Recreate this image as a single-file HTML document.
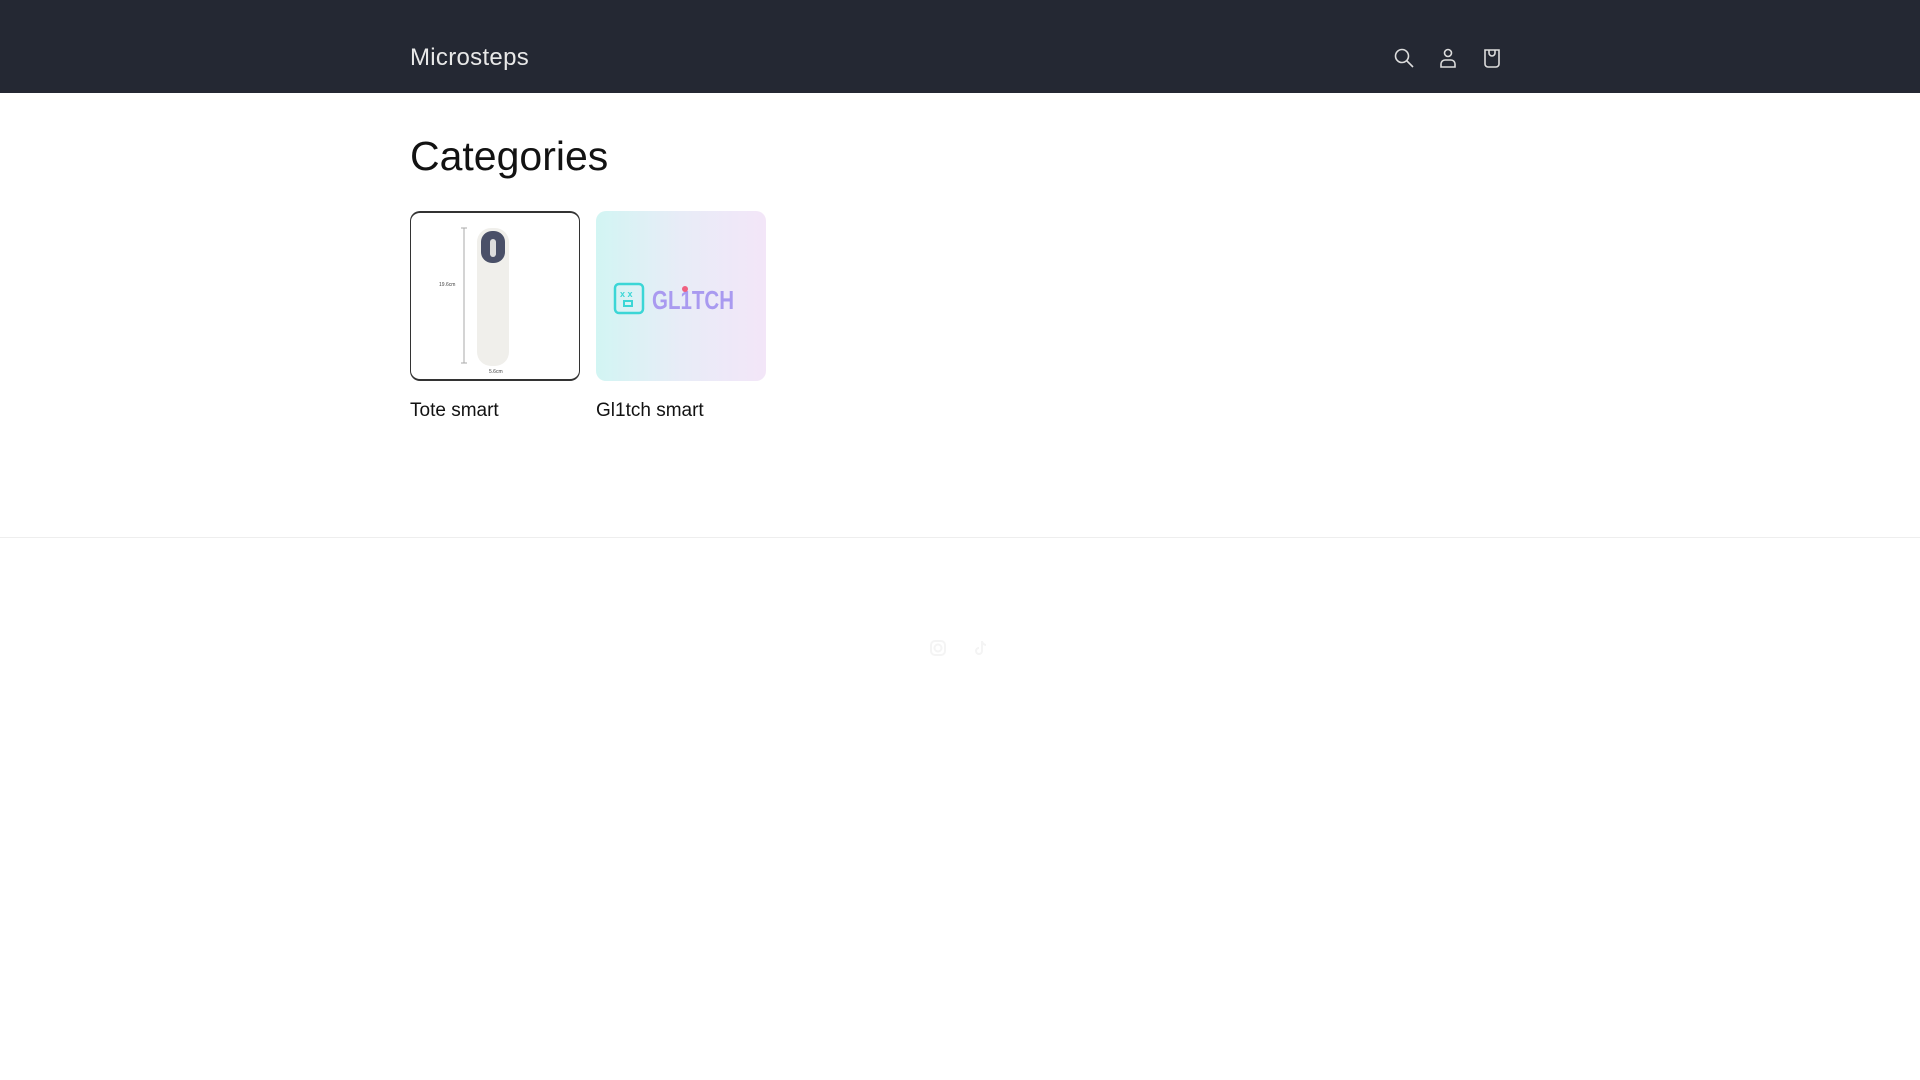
<!DOCTYPE html>
<html><head><meta charset="utf-8"><style>
*{margin:0;padding:0;box-sizing:border-box}
body{width:1920px;height:1080px;background:#fff;font-family:"Liberation Sans",sans-serif;color:#121212;overflow:hidden;position:relative}
header{height:93px;background:#242833;position:relative}
.logo{position:absolute;left:410px;top:44px;font-size:24px;color:#e8e8e8;letter-spacing:0.3px}
.ic{position:absolute;top:47px}
h1{position:absolute;left:410px;top:133px;font-size:41px;font-weight:400;color:#121212}
.card{position:absolute;top:211px;width:170px;height:170px;border-radius:10px;overflow:hidden}
.c1{left:410px;border:1px solid #333;border-top:2px solid #333;border-bottom:2px solid #333;background:#fff}
.c2{left:596px;background:linear-gradient(90deg,#d2f5f3,#e8ecf7 50%,#f3e6f8)}
.lbl{position:absolute;top:400px;font-size:19px;color:#121212}
hr{position:absolute;top:537px;left:0;width:1920px;border:0;border-top:1px solid #eee}
</style></head><body>
<header>
<div class="logo">Microsteps</div>
<svg class="ic" style="left:1393px" width="22" height="22" viewBox="0 0 22 22" fill="none" stroke="#ddd" stroke-width="1.6"><circle cx="9" cy="9" r="6.5"/><path d="M14 14l6 6"/></svg>
<svg class="ic" style="left:1437px" width="22" height="22" viewBox="0 0 22 22" fill="none" stroke="#ddd" stroke-width="1.6"><circle cx="11" cy="6" r="3.5"/><path d="M4 20v-3a4 4 0 0 1 4-4h6a4 4 0 0 1 4 4v3z"/></svg>
<svg class="ic" style="left:1481px" width="22" height="22" viewBox="0 0 22 22" fill="none" stroke="#ddd" stroke-width="1.6"><path d="M4 3h14v14a3 3 0 0 1-3 3H7a3 3 0 0 1-3-3z"/><path d="M8 3v3a3 3 0 0 0 6 0V3"/></svg>
</header>
<h1>Categories</h1>
<div class="card c1">
<svg width="170" height="170" viewBox="0 0 170 170">
<line x1="53" y1="15" x2="53" y2="150" stroke="#aaa"/><line x1="50" y1="15" x2="56" y2="15" stroke="#aaa"/><line x1="50" y1="150" x2="56" y2="150" stroke="#aaa"/>
<text x="28" y="73" font-size="5" fill="#444">19.6cm</text>
<rect x="66" y="15" width="32" height="138" rx="14" fill="#f0efeb"/>
<rect x="70" y="18" width="24" height="32" rx="11" fill="#4a5068"/>
<rect x="79" y="26" width="6" height="18" rx="3" fill="#ddd"/>
<text x="78" y="160" font-size="5" fill="#444">5.6cm</text>
</svg></div>
<div class="card c2">
<svg width="170" height="170" viewBox="0 0 170 170">
<rect x="19" y="73" width="28" height="29" rx="4" fill="none" stroke="#3bd6d6" stroke-width="2.5"/>
<text x="24" y="86" font-size="9" fill="#3bd6d6" font-weight="bold">x x</text>
<rect x="28" y="90" width="8" height="5" fill="none" stroke="#3bd6d6" stroke-width="2"/>
<text x="56" y="98" font-size="26" font-weight="bold" fill="#a99af0" textLength="82" lengthAdjust="spacingAndGlyphs">GL1TCH</text>
<circle cx="89" cy="78" r="3" fill="#f06080"/>
</svg></div>
<div class="lbl" style="left:410px">Tote smart</div>
<div class="lbl" style="left:596px">Gl1tch smart</div>
<hr>
<svg style="position:absolute;left:930px;top:640px" width="16" height="16" viewBox="0 0 16 16" fill="none" stroke="#f4f4f4" stroke-width="2"><rect x="1" y="1" width="14" height="14" rx="4"/><circle cx="8" cy="8" r="3.5"/></svg>
<svg style="position:absolute;left:973px;top:640px" width="16" height="16" viewBox="0 0 16 16" fill="none" stroke="#f4f4f4" stroke-width="2"><path d="M9 1v10a3 3 0 1 1-3-3M9 1c0 2 2 4 4 4"/></svg>
</body></html>
